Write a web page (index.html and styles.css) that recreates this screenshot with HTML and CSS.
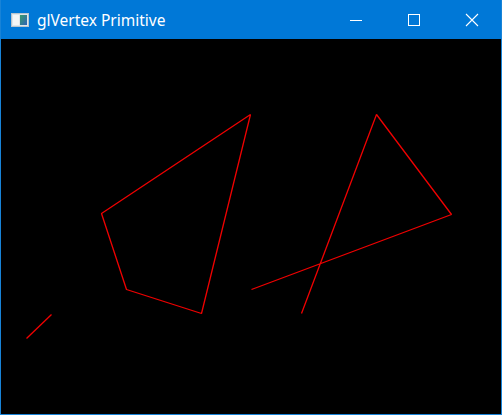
FILE: index.html
```html
<!DOCTYPE html>
<html>
<head>
<meta charset="utf-8">
<link rel="stylesheet" href="styles.css">
</head>
<body>
<div class="window">
  <div class="titlebar">
    <svg class="app-icon" width="18" height="14" viewBox="0 0 18 14">
      <defs>
        <linearGradient id="g" x1="0" y1="0" x2="1" y2="1">
          <stop offset="0" stop-color="#3a9c6a"/>
          <stop offset="1" stop-color="#2f63b8"/>
        </linearGradient>
      </defs>
      <rect x="0.5" y="0.5" width="17" height="13" fill="#dfe6ea" stroke="#b8c4cc"/>
      <rect x="2" y="2" width="6" height="10" fill="#f4f6f6"/>
      <rect x="9" y="2" width="7" height="10" fill="url(#g)"/>
    </svg>
    <span class="title">glVertex Primitive</span>
    <div class="caption-buttons">
      <div class="cbtn">
        <svg width="14" height="14" viewBox="0 0 14 14"><path d="M1 7.5H13" stroke="#fff" stroke-width="1" shape-rendering="crispEdges"/></svg>
      </div>
      <div class="cbtn">
        <svg width="14" height="14" viewBox="0 0 14 14"><rect x="1.5" y="1.5" width="11" height="11" fill="none" stroke="#fff" stroke-width="1" shape-rendering="crispEdges"/></svg>
      </div>
      <div class="cbtn">
        <svg width="14" height="14" viewBox="0 0 14 14"><path d="M1 1L13 13M13 1L1 13" stroke="#fff" stroke-width="1.1"/></svg>
      </div>
    </div>
  </div>
  <div class="client">
    <svg class="canvas" width="500" height="374" viewBox="0 0 500 374">
      <polygon points="100.5,174.5 249.5,75.5 200.5,274.5 125.5,250.5" fill="none" stroke="#f00000" stroke-width="1.3" stroke-linejoin="bevel"/>
      <polyline points="250.5,250.5 450.5,175.5 375.5,75.5 300.5,274.5" fill="none" stroke="#f00000" stroke-width="1.3" stroke-linejoin="bevel"/>
      <line x1="25.5" y1="299.5" x2="50.5" y2="275.5" stroke="#f00000" stroke-width="1.3"/>
    </svg>
  </div>
</div>
</body>
</html>
```

FILE: styles.css
```css
html, body {
  margin: 0;
  padding: 0;
  background: #000;
}
.window {
  width: 502px;
  height: 415px;
  box-sizing: border-box;
  border: 1px solid #1883d7;
  border-top: none;
  display: flex;
  flex-direction: column;
  background: #0078d7;
}
.titlebar {
  height: 39px;
  flex: none;
  display: flex;
  align-items: center;
  background: #0078d7;
  color: #fff;
}
.app-icon {
  margin-left: 10px;
  flex: none;
}
.title {
  margin-left: 8px;
  font-family: "Noto Sans", "Open Sans", sans-serif;
  font-size: 15.5px;
  line-height: 20px;
  color: #fff;
  flex: 1;
  white-space: nowrap;
}
.caption-buttons {
  display: flex;
  align-self: stretch;
}
.cbtn {
  width: 58px;
  display: flex;
  align-items: center;
  justify-content: center;
}
.client {
  flex: 1;
  background: #000;
  overflow: hidden;
}
.canvas {
  display: block;
}
```
